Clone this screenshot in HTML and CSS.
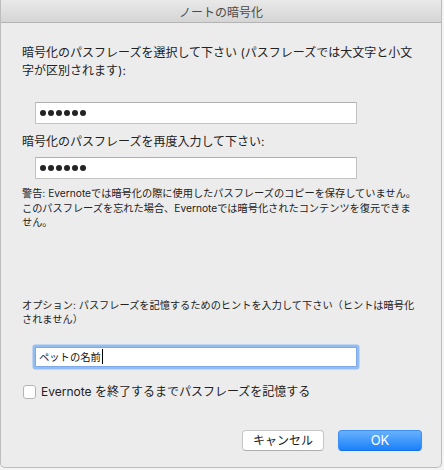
FILE: index.html
```html
<!DOCTYPE html>
<html lang="ja">
<head>
<meta charset="utf-8">
<title>ノートの暗号化</title>
<link rel="stylesheet" href="styles.css">
</head>
<body>
<div class="window">
  <div class="titlebar">ノートの暗号化</div>
  <div class="content">
    <p class="label label-first">暗号化のパスフレーズを選択して下さい (パスフレーズでは大文字と小文字が区別されます):</p>
    <div class="field field-first"><span class="dot"></span><span class="dot"></span><span class="dot"></span><span class="dot"></span><span class="dot"></span><span class="dot"></span></div>
    <p class="label label-second">暗号化のパスフレーズを再度入力して下さい:</p>
    <div class="field field-second"><span class="dot"></span><span class="dot"></span><span class="dot"></span><span class="dot"></span><span class="dot"></span><span class="dot"></span></div>
    <p class="small warn">警告: Evernoteでは暗号化の際に使用したパスフレーズのコピーを保存していません。このパスフレーズを忘れた場合、Evernoteでは暗号化されたコンテンツを復元できません。</p>
    <p class="small option">オプション: パスフレーズを記憶するためのヒントを入力して下さい（ヒントは暗号化されません）</p>
    <div class="field hint"><span class="hint-text">ペットの名前</span><span class="caret"></span></div>
    <div class="check"><span class="box"></span><span class="check-label">Evernote を終了するまでパスフレーズを記憶する</span></div>
    <div class="buttons">
      <button class="btn btn-cancel">キャンセル</button>
      <button class="btn btn-ok">OK</button>
    </div>
  </div>
</div>
</body>
</html>
```
FILE: styles.css
```css
html, body {
  margin: 0;
  padding: 0;
}
body {
  background: #f3f3f3;
  font-family: "Inter", "Noto Sans CJK JP", sans-serif;
  color: #222;
}
.window {
  width: 440px;
  height: 467px;
  background: #ececec;
  border: 1px solid #bdbdbd;
  border-top: none;
  border-radius: 0 0 5px 5px;
  display: flex;
  flex-direction: column;
  overflow: hidden;
}
.titlebar {
  height: 22px;
  line-height: 26px;
  border-bottom: 1px solid #b3b3b3;
  background: linear-gradient(#e9e9e9, #d5d5d5);
  text-align: center;
  font-size: 12px;
  color: #4a4a4a;
  flex: none;
}
.content {
  flex: 1;
  display: flex;
  flex-direction: column;
  padding: 0 19px 0 21px;
}
.label {
  margin: 0;
  font-size: 12px;
  line-height: 18px;
  max-width: 398px;
}
.label-first {
  margin-top: 21px;
}
.label-second {
  margin-top: 9px;
}
.field {
  box-sizing: border-box;
  width: 322px;
  height: 22px;
  margin-left: 13px;
  background: #fff;
  border: 1px solid #c3c3c3;
  border-top-color: #b0b0b0;
  display: flex;
  align-items: center;
  gap: 2px;
  padding-left: 4px;
}
.field-first {
  margin-top: 22px;
}
.field-second {
  margin-top: 6px;
}
.dot {
  width: 6px;
  height: 6px;
  border-radius: 50%;
  background: #232323;
}
.small {
  margin: 0;
  font-size: 10.2px;
  line-height: 14.5px;
  max-width: 396px;
}
.warn {
  margin-top: 7px;
}
.option {
  margin-top: 68px;
}
.hint {
  margin-top: 20px;
  height: 20px;
  border: 1px solid #7ea9e6;
  border-radius: 1px;
  box-shadow: 0 0 0 2.5px #93bdf2;
  padding-left: 3px;
  gap: 0;
}
.hint-text {
  font-size: 10.3px;
  line-height: 16px;
  color: #111;
}
.caret {
  width: 1px;
  height: 15px;
  background: #000;
  margin-left: 1px;
}
.check {
  margin-top: 18px;
  height: 14px;
  display: flex;
  align-items: center;
  gap: 5px;
  margin-left: 1px;
}
.box {
  box-sizing: border-box;
  width: 13px;
  height: 14px;
  background: #fff;
  border: 1px solid #b5b5b5;
  border-radius: 3px;
}
.check-label {
  font-size: 12px;
  line-height: 14px;
  color: #222;
}
.buttons {
  margin-top: 31px;
  display: flex;
  justify-content: flex-end;
  gap: 14px;
}
.btn {
  box-sizing: border-box;
  height: 21px;
  padding: 0;
  font-family: "Inter", "Noto Sans CJK JP", sans-serif;
  font-size: 12px;
  line-height: 19px;
  border-radius: 4px;
}
.btn-cancel {
  width: 82px;
  background: #fff;
  border: 1px solid #c6c6c6;
  border-bottom-color: #adadad;
  color: #222;
}
.btn-ok {
  width: 84px;
  background: linear-gradient(#69b1fb, #1a81fb);
  border: 1px solid #3d8ff5;
  border-bottom-color: #1570e6;
  color: #fff;
  font-size: 13px;
}
```
